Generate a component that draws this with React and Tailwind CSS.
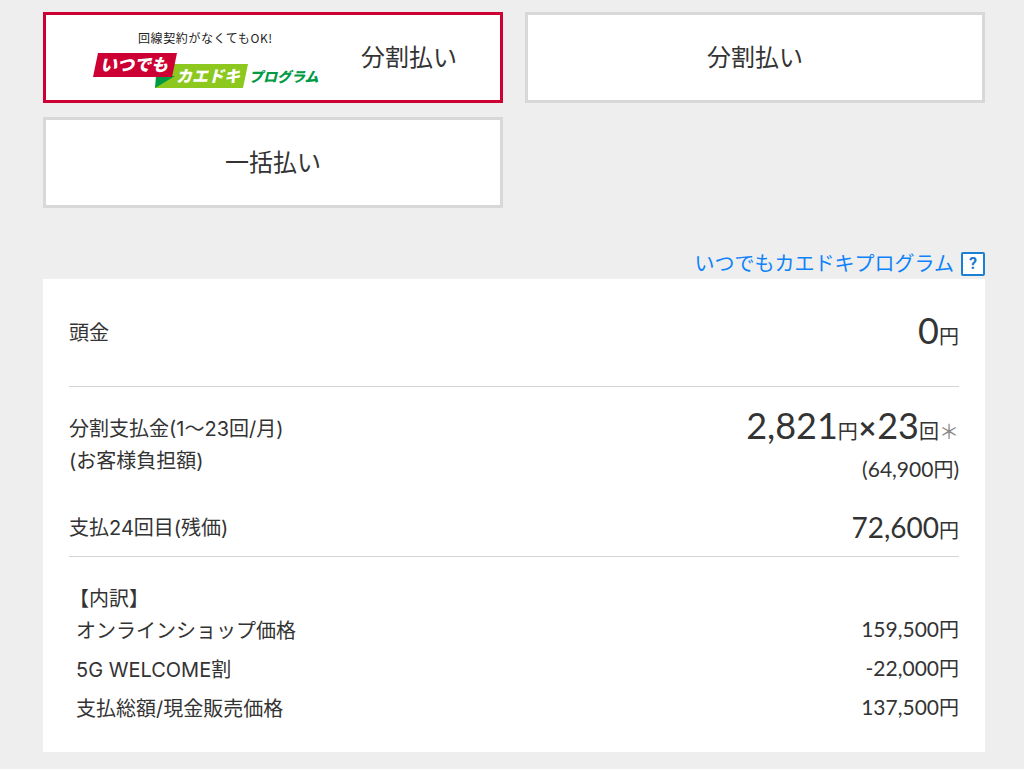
import React, { useState } from 'react';

const plans = [
  { id: 'kaedoki', label: '分割払い', logo: true },
  { id: 'installment', label: '分割払い' },
  { id: 'lump', label: '一括払い' },
];

const breakdown = [
  { label: 'オンラインショップ価格', value: '159,500' },
  { label: '5G WELCOME割', value: '-22,000' },
  { label: '支払総額/現金販売価格', value: '137,500' },
];

function KaedokiLogo() {
  return (
    <svg width="228" height="60" viewBox="0 -2 228 60" className="ml-1 shrink-0 font-['Noto_Sans_CJK_JP',sans-serif]" role="img" aria-label="いつでもカエドキプログラム">
      <text x="45" y="13" fontSize="12" fill="#222" className="tracking-wider">回線契約がなくてもOK!</text>
      {/* green ribbon with its fold, red ribbon on top */}
      <path d="M70 34H155L150 58H62Z" fill="#8cc81e" />
      <path d="M63 46H82L62 58Z" fill="#009944" />
      <path d="M5 23H84L79 47H0Z" fill="#cc0033" />
      <g fontWeight="900" fontStyle="italic">
        <text x="7" y="41" fontSize="17" fill="#fff">いつでも</text>
        <text x="83" y="52" fontSize="16" fill="#fff">カエドキ</text>
        <text x="156" y="52" fontSize="14" fill="#009944">プログラム</text>
      </g>
    </svg>
  );
}

function Yen() {
  return <span className="text-xl">円</span>;
}

export default function App() {
  const [selected, setSelected] = useState('kaedoki');

  return (
    <main className="min-h-screen bg-[#eee] pt-3 pb-4 pl-[43px] pr-[39px] text-xl text-[#333] font-['Inter','Noto_Sans_CJK_JP',sans-serif]">
      <div className="grid grid-cols-2 gap-x-[22px] gap-y-[14px]">
        {plans.map((plan) => (
          <button
            key={plan.id}
            type="button"
            aria-pressed={selected === plan.id}
            onClick={() => setSelected(plan.id)}
            className={`h-[91px] flex items-center justify-center gap-10 border-[3px] bg-white text-2xl cursor-pointer ${
              selected === plan.id ? 'border-[#cc0033]' : 'border-[#d8d8d8]'
            }`}
          >
            {plan.logo && <KaedokiLogo />}
            <span>{plan.label}</span>
          </button>
        ))}
      </div>

      <div className="mt-11 mb-[3px] flex justify-end">
        <a href="#program" className="flex items-center gap-[7px] leading-6 text-[#0d82fa]">
          いつでもカエドキプログラム
          <span className="flex size-6 items-center justify-center rounded-xs border-2 border-[#1a80d4] bg-white text-base font-bold text-[#1a78cc] font-['Roboto',sans-serif]">?</span>
        </a>
      </div>

      <section className="bg-white px-[26px]">
        <dl className="flex items-start justify-between border-b border-[#d4d4d4] pt-8 pb-9">
          <dt className="pt-[6px] leading-8">頭金</dt>
          <dd className="text-4xl leading-[38px] font-['Lato','Noto_Sans_CJK_JP',sans-serif]">0<Yen /></dd>
        </dl>

        <dl className="border-b border-[#d4d4d4] pt-4 pb-3">
          <div className="flex justify-between">
            <dt className="pt-[10px] leading-8">
              分割支払金(1〜23回/月)
              <br />
              (お客様負担額)
            </dt>
            <dd className="text-right font-['Lato','Noto_Sans_CJK_JP',sans-serif]">
              <p className="flex items-baseline justify-end text-4xl leading-11">
                2,821<Yen /><span className="px-px text-3xl font-bold">×</span>23<span className="text-xl">回</span>
                <span className="text-xl text-[#888]">＊</span>
              </p>
              <p className="text-[21px] leading-11">(64,900<Yen />)</p>
            </dd>
          </div>
          <div className="mt-5 flex items-center justify-between">
            <dt className="leading-8">支払24回目(残価)</dt>
            <dd className="text-[28px] leading-8 font-['Lato','Noto_Sans_CJK_JP',sans-serif]">72,600<Yen /></dd>
          </div>
        </dl>

        <div className="pt-[26px] pb-[27px]">
          <h2 className="leading-8">【内訳】</h2>
          <dl className="flex flex-col gap-[7px] pl-[7px]">
            {breakdown.map((row) => (
              <div key={row.label} className="flex justify-between leading-8">
                <dt>{row.label}</dt>
                <dd className="text-[21px] leading-7 font-['Lato','Noto_Sans_CJK_JP',sans-serif]">{row.value}<Yen /></dd>
              </div>
            ))}
          </dl>
        </div>
      </section>
    </main>
  );
}
